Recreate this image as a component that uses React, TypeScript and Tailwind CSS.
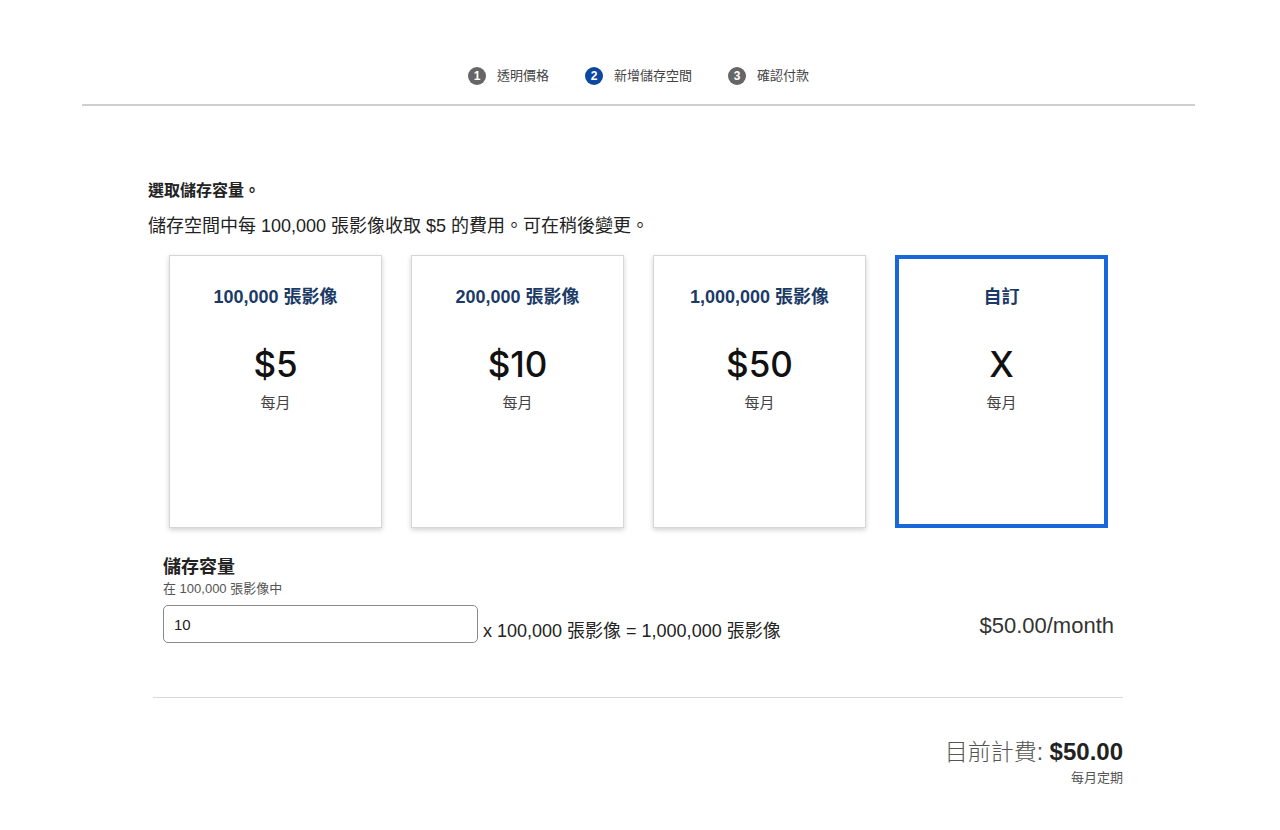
const font = "font-['Liberation_Sans','Noto_Sans_CJK_TC',sans-serif]";

const steps = [
  { n: 1, label: "透明價格", active: false },
  { n: 2, label: "新增儲存空間", active: true },
  { n: 3, label: "確認付款", active: false },
];

const plans = [
  { title: "100,000 張影像", price: "$5", selected: false },
  { title: "200,000 張影像", price: "$10", selected: false },
  { title: "1,000,000 張影像", price: "$50", selected: false },
  { title: "自訂", price: "X", selected: true },
];

function PlanCard({ title, price, selected }: { title: string; price: string; selected: boolean }) {
  return (
    <div
      className={
        selected
          ? "flex h-[273px] w-[213px] flex-col items-center border-4 border-[#1a66db] bg-white pt-[28px]"
          : "flex h-[273px] w-[213px] flex-col items-center border border-[#d6d6d6] bg-white pt-[31px] shadow-[0_2px_5px_rgba(0,0,0,0.18)]"
      }
    >
      <p className="text-[18px] font-bold leading-[20px] text-[#1b3a66]">{title}</p>
      <p className="mt-[37px] font-['Inter','Noto_Sans_CJK_TC',sans-serif] text-[35px] font-medium leading-[40px] text-[#111]">
        {price}
      </p>
      <p className="mt-[9px] text-[15px] leading-[20px] text-[#444]">每月</p>
    </div>
  );
}

export default function App() {
  return (
    <div className={`min-h-[830px] w-[1280px] bg-white text-[#222] ${font}`}>
      <div className="ml-[82px] flex w-[1113px] items-center justify-center gap-9 border-b-2 border-[#cfcfcf] pt-[64px] pb-[16px]">
        {steps.map((s) => (
          <div key={s.n} className="flex h-[24px] items-center gap-[11px]">
            <span
              className={
                s.active
                  ? "flex h-[18px] w-[18px] items-center justify-center rounded-full bg-[#0d47a1] text-[12px] font-bold text-white"
                  : "flex h-[18px] w-[18px] items-center justify-center rounded-full bg-[#666] text-[12px] font-bold text-white"
              }
            >
              {s.n}
            </span>
            <span className="text-[13px] text-[#444]">{s.label}</span>
          </div>
        ))}
      </div>

      <div className="ml-[148px] w-[975px]">
        <h2 className="mt-[75px] text-[16px] font-bold leading-[20px] text-[#222]">選取儲存容量。</h2>
        <p className="mt-[15px] text-[18px] leading-[20px] text-[#222]">
          儲存空間中每 100,000 張影像收取 $5 的費用。可在稍後變更。
        </p>

        <div className="mt-[19px] flex gap-[29px] pl-[21px]">
          {plans.map((p) => (
            <PlanCard key={p.title} {...p} />
          ))}
        </div>

        <div className="pl-[15px] pr-[9px]">
          <p className="mt-[28px] text-[18px] font-bold leading-[22px] text-[#222]">儲存容量</p>
          <p className="mt-[3px] text-[13px] leading-[16px] text-[#555]">在 100,000 張影像中</p>
          <div className="mt-[8px] flex items-end">
            <input
              defaultValue="10"
              className={`h-[38px] w-[315px] rounded-[5px] border border-[#8a8a8a] px-[10px] text-[15px] text-[#222] outline-none ${font}`}
            />
            <span className="ml-[5px] mb-[1px] text-[18px] leading-[22px] text-[#222]">
              x 100,000 張影像 = 1,000,000 張影像
            </span>
            <span className="mb-[4px] ml-auto text-[22px] leading-[26px] text-[#333]">$50.00/month</span>
          </div>
        </div>

        <div className="ml-[5px] mt-[54px] border-t border-[#d8d8d8]" />

        <div className="mt-[40px] flex flex-col items-end">
          <p className="leading-[28px]">
            <span className="text-[23px] font-light text-[#555]">目前計費: </span>
            <span className="text-[24px] font-bold text-[#222]">$50.00</span>
          </p>
          <p className="mt-[1px] text-[13px] leading-[16px] text-[#555]">每月定期</p>
        </div>
      </div>
    </div>
  );
}
